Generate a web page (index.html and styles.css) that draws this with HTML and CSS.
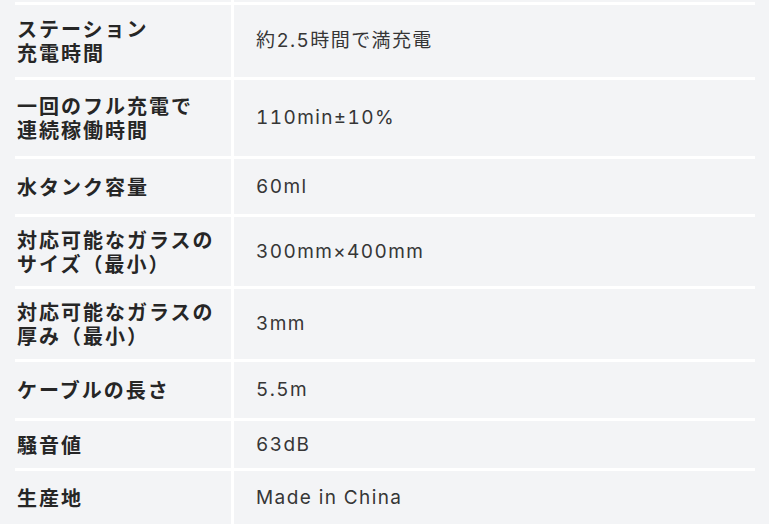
FILE: index.html
```html
<!DOCTYPE html>
<html lang="ja">
<head>
<meta charset="utf-8">
<title>仕様</title>
<link rel="stylesheet" href="styles.css">
</head>
<body>
<div class="spec">
  <div class="cell spacer"></div><div class="cell spacer"></div>

  <div class="cell label r1">ステーション<br>充電時間</div>
  <div class="cell value r1">約2.5時間で満充電</div>

  <div class="cell label r2">一回のフル充電で<br>連続稼働時間</div>
  <div class="cell value r2">110min±10%</div>

  <div class="cell label r3">水タンク容量</div>
  <div class="cell value r3">60ml</div>

  <div class="cell label r4">対応可能なガラスの<br>サイズ（最小）</div>
  <div class="cell value r4">300mm×400mm</div>

  <div class="cell label r5">対応可能なガラスの<br>厚み（最小）</div>
  <div class="cell value r5">3mm</div>

  <div class="cell label r6">ケーブルの長さ</div>
  <div class="cell value r6">5.5m</div>

  <div class="cell label r7">騒音値</div>
  <div class="cell value r7">63dB</div>

  <div class="cell label r8">生産地</div>
  <div class="cell value r8">Made in China</div>
</div>
</body>
</html>
```

FILE: styles.css
```css
html, body {
  margin: 0;
  padding: 0;
  background: #f3f4f6;
}

body {
  overflow: hidden;
  height: 524px;
}

.spec {
  margin-left: 15px;
  width: 740px;
  display: grid;
  grid-template-columns: 216px 1fr;
  gap: 3px;
  background: #ffffff;
}

.cell {
  background: #f3f4f6;
  display: flex;
  flex-direction: column;
  justify-content: center;
  box-sizing: border-box;
}

.spacer { height: 2px; }

.label {
  padding-left: 2px;
  font-family: "Noto Sans CJK JP", "Noto Sans", sans-serif;
  font-weight: 700;
  font-size: 20px;
  line-height: 24px;
  letter-spacing: 2px;
  color: #262626;
}

.value {
  padding-left: 22px;
  font-family: Inter, "Noto Sans CJK JP", sans-serif;
  font-variant-numeric: tabular-nums;
  font-weight: 400;
  font-size: 19px;
  line-height: 24px;
  letter-spacing: 1.4px;
  color: #363636;
}

.r1 { height: 72px; }
.r2 { height: 76px; }
.r3 { height: 55px; }
.r4 { height: 69px; }
.r5 { height: 70px; }
.r6 { height: 56px; }
.r7 { height: 47px; }
.r8 { height: 54px; }
```
